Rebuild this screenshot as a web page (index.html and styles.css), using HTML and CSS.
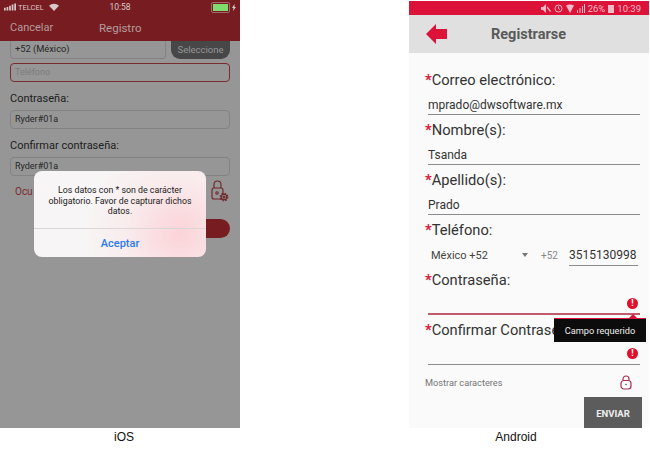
FILE: index.html
```html
<!DOCTYPE html>
<html lang="es">
  <head>
    <meta charset="UTF-8" />
    <title>Registro iOS / Android</title>
    <link rel="stylesheet" href="styles.css">
  </head>
  <body>
    <div class="shots">
      <!-- iOS -->
      <div class="shot">
        <div class="phone ios">
          <div class="ios-status">
            <div class="ios-carrier">
              <svg width="12" height="8" viewBox="0 0 14 8"><path fill="#d8c8c8" d="M0 5h2v3H0zM3 4h2v4H3zM6 2.500h2V8H6zM9 1h2v7H9zM12 0h2v8h-2z"/></svg>
              <span>TELCEL</span>
              <svg class="ios-wifi" width="10" height="8" viewBox="0 0 10 8"><path fill="#d8c8c8" d="M5 8 0 2.800C2.800 0 7.200 0 10 2.800z"/></svg>
            </div>
            <span class="ios-clock">10:58</span>
            <div class="ios-battery">
              <span class="ios-cell"><i></i></span>
              <svg width="4" height="7" viewBox="0 0 4 7"><path fill="#d8c8c8" d="M2.500 0 0 4h1.500L1 7l3-4H2.500z"/></svg>
            </div>
          </div>
          <div class="ios-nav">
            <span class="ios-cancel">Cancelar</span>
            <span class="ios-title">Registro</span>
          </div>
          <div class="ios-form">
            <div class="ios-row">
              <div class="ios-input grow cut">+52 (México)</div>
              <div class="ios-pick">Seleccione</div>
            </div>
            <div class="ios-input error placeholder">Teléfono</div>
            <div class="ios-label">Contraseña:</div>
            <div class="ios-input">Ryder#01a</div>
            <div class="ios-label">Confirmar contraseña:</div>
            <div class="ios-input">Ryder#01a</div>
            <div class="ios-show">
              <span>Ocu</span>
              <svg width="18" height="22" viewBox="0 0 18 22" fill="none" stroke="#6e2226" stroke-width="1.100">
                <rect x="1" y="8" width="11" height="11" rx="2"/>
                <path d="M3 8V4.500a3.500 3.500 0 0 1 7 0V8"/>
                <circle cx="6" cy="13" r="1.200"/>
                <circle cx="13" cy="17" r="2.800" fill="#969696"/>
                <circle cx="13" cy="17" r="3.800" stroke-width="1.200" stroke-dasharray="1.500 1.500"/>
                <circle cx="13" cy="17" r="1"/>
              </svg>
            </div>
            <div class="ios-send"></div>
          </div>
          <div class="ios-dialog">
            <p class="ios-msg">Los datos con * son de carácter obligatorio. Favor de capturar dichos datos.</p>
            <div class="ios-accept">Aceptar</div>
          </div>
        </div>
        <div class="caption ios-caption">iOS</div>
      </div>

      <!-- Android -->
      <div class="shot">
        <div class="phone android">
          <div class="and-status">
            <svg width="10" height="9" viewBox="0 0 10 9"><path fill="#f3b9c4" d="M0 3h2l3-3v9L2 6H0zM6 2l4 5-1 1-3-4z"/></svg>
            <svg width="9" height="9" viewBox="0 0 9 9" fill="none" stroke="#f3b9c4"><circle cx="4.500" cy="4.500" r="3.500"/><path d="M4.500 2.500v2l1.500 1"/></svg>
            <svg width="8" height="9" viewBox="0 0 8 9"><path fill="#f3b9c4" d="M0 1.500C2.500 0 5.500 0 8 1.500L4 9z"/></svg>
            <svg width="8" height="9" viewBox="0 0 8 9"><path fill="#f3b9c4" d="M0 6h1v3H0zM2.500 4h1v5h-1zM5 2h1v7H5zM7 0h1v9H7z"/></svg>
            <span>26%</span>
            <svg width="6" height="9" viewBox="0 0 6 9"><path fill="#f3b9c4" d="M0 1h6v8H0z"/></svg>
            <span>10:39</span>
          </div>
          <div class="and-header">
            <svg class="and-back" width="21" height="20" viewBox="0 0 21 20"><path fill="#dd1238" d="M0 10 10 0v5h11v10H10v5z"/></svg>
            <span>Registrarse</span>
          </div>
          <div class="and-form">
            <div class="and-label"><b>*</b>Correo electrónico:</div>
            <div class="and-value">mprado@dwsoftware.mx</div>
            <div class="and-label"><b>*</b>Nombre(s):</div>
            <div class="and-value">Tsanda</div>
            <div class="and-label"><b>*</b>Apellido(s):</div>
            <div class="and-value">Prado</div>
            <div class="and-label"><b>*</b>Teléfono:</div>
            <div class="and-phone">
              <span class="and-country">México +52</span>
              <span class="and-caret"></span>
              <span class="and-code">+52</span>
              <span class="and-number">3515130998</span>
            </div>
            <div class="and-label"><b>*</b>Contraseña:</div>
            <div class="and-value invalid"><span class="and-alert">!</span></div>
            <div class="and-label"><b>*</b>Confirmar Contraseña:</div>
            <div class="and-value"><span class="and-alert">!</span></div>
            <div class="and-show">
              <span>Mostrar caracteres</span>
              <svg width="12" height="15" viewBox="0 0 12 15" fill="none" stroke="#a3324f" stroke-width="1.200">
                <rect x="1" y="5.500" width="10" height="8.500" rx="3"/>
                <path d="M3 5.500V4a3 3 0 0 1 6 0v1.500"/>
                <circle cx="6" cy="9.500" r=".8" fill="#555" stroke="none"/>
              </svg>
            </div>
            <div class="and-actions"><div class="and-send">ENVIAR</div></div>
          </div>
          <div class="and-tooltip">Campo requerido</div>
        </div>
        <div class="caption android-caption">Android</div>
      </div>
    </div>
  </body>
</html>
```

FILE: styles.css
```css
body {
  margin: 0;
  background-color: #fff;
  font-family: "Liberation Sans", Arial, sans-serif;
}
.shots {
  display: flex;
  justify-content: space-between;
  width: 649px;
}
.shot {
  width: 240px;
}
.phone {
  position: relative;
  height: 428px;
  overflow: hidden;
}
.caption {
  padding-top: 1px;
  font-size: 12px;
  line-height: 16px;
  text-align: center;
  color: #111;
}
.ios-caption {
  padding-left: 8px;
}
.android-caption {
  padding-right: 26px;
}

/* iOS */
.ios {
  background-color: #969696;
  font-family: "Roboto", sans-serif;
}
.ios-status {
  display: flex;
  align-items: center;
  justify-content: space-between;
  height: 14px;
  padding: 0 4px;
  background-color: #771c21;
  font-size: 7.500px;
  color: #d8c8c8;
}
.ios-carrier {
  display: flex;
  align-items: center;
  gap: 2px;
  width: 80px;
}
.ios-wifi {
  margin-left: 3px;
}
.ios-clock {
  font-size: 8.500px;
}
.ios-battery {
  display: flex;
  align-items: center;
  justify-content: flex-end;
  gap: 2px;
  width: 80px;
}
.ios-cell {
  display: block;
  width: 15px;
  height: 7px;
  padding: 1px;
  border: 1px solid #a06a6a;
  border-radius: 2px;
}
.ios-cell i {
  display: block;
  height: 100%;
  background-color: #7fdc6f;
}
.ios-nav {
  display: flex;
  align-items: center;
  height: 27px;
  padding-left: 10px;
  background-color: #771c21;
  font-size: 11px;
  color: #b39c9c;
}
.ios-cancel {
  width: 89px;
}
.ios-title {
  font-size: 11.500px;
}
.ios-form {
  display: flex;
  flex-direction: column;
  padding: 0 10px;
}
.ios-row {
  display: flex;
  gap: 5px;
  height: 18px;
  margin-bottom: 4px;
}
.ios-input {
  box-sizing: border-box;
  height: 19px;
  padding-left: 4px;
  border: 1px solid #838383;
  border-radius: 4px;
  font-size: 9px;
  line-height: 17px;
  color: #262626;
}
.ios-input.grow {
  flex: 1;
  height: 18px;
  font-size: 9.300px;
  line-height: 15px;
}
.ios-input.cut {
  border-top: 0;
  border-radius: 0 0 4px 4px;
}
.ios-input.error {
  border-color: #7a2a30;
}
.ios-input.placeholder {
  color: #7c7c7c;
}
.ios-pick {
  width: 59px;
  border-radius: 0 0 9px 9px / 9px;
  background-color: #474747;
  font-size: 9.500px;
  line-height: 17px;
  text-align: center;
  color: #969696;
}
.ios-label {
  padding: 10px 0 5px;
  font-size: 11px;
  line-height: 13px;
  color: #1c1c1c;
}
.ios-show {
  display: flex;
  align-items: center;
  justify-content: space-between;
  height: 26px;
  margin-top: 2px;
  padding: 0 1px 0 5px;
  font-size: 10px;
  color: #7a2a30;
}
.ios-send {
  align-self: flex-end;
  width: 120px;
  height: 19px;
  margin-top: 15px;
  border-radius: 10px;
  background-color: #771c21;
}
.ios-dialog {
  position: absolute;
  top: 171px;
  left: 34px;
  width: 172px;
  height: 86px;
  border-radius: 8px;
  background: radial-gradient(circle at 85% 72%, #fbd3d8 0, #f9eced 35%, #f7f5f5 60%);
}
.ios-msg {
  box-sizing: border-box;
  height: 58px;
  margin: 0;
  padding: 14px 12px 0;
  border-bottom: 1px solid #ddd6d6;
  font-size: 8.800px;
  line-height: 10.500px;
  text-align: center;
  color: #222;
}
.ios-accept {
  font-size: 11px;
  font-weight: 500;
  line-height: 29px;
  text-align: center;
  color: #2b7bf0;
}

/* Android */
.android {
  background-color: #fafafa;
  font-family: "Roboto", sans-serif;
}
.and-status {
  display: flex;
  align-items: center;
  justify-content: flex-end;
  gap: 3px;
  height: 14px;
  padding-right: 8px;
  border-top: 1px solid #fff;
  background-color: #dd1238;
  font-size: 9.500px;
  color: #f3b9c4;
}
.and-header {
  display: flex;
  align-items: center;
  height: 38px;
  background-color: #e0e0e0;
  font-size: 14.500px;
  font-weight: 700;
  color: #5a5a5a;
}
.and-back {
  margin: 0 44px 0 17px;
}
.and-form {
  display: flex;
  flex-direction: column;
  padding: 17px 9px 0 16px;
}
.and-label {
  font-size: 14.700px;
  line-height: 20px;
  white-space: nowrap;
  color: #333;
}
.and-label b {
  font-weight: 700;
  color: #dd1238;
}
.and-value {
  display: flex;
  align-items: center;
  box-sizing: border-box;
  height: 25px;
  margin: 0 0 5px 3px;
  padding: 6px 1px 0 0;
  border-bottom: 1px solid #8b8b8b;
  font-size: 12px;
  color: #333;
}
.and-value.invalid {
  border-bottom: 2px solid #c05a6c;
}
.and-alert {
  display: block;
  width: 11px;
  height: 11px;
  margin: -3px 1px 0 auto;
  border-radius: 50%;
  background-color: #e0102c;
  font-size: 9px;
  font-weight: 700;
  line-height: 11px;
  text-align: center;
  color: #fff;
}
.and-phone {
  display: flex;
  align-items: center;
  height: 30px;
  margin-left: 6px;
  font-size: 11px;
  color: #444;
}
.and-country {
  width: 91px;
}
.and-caret {
  width: 0;
  height: 0;
  margin-right: 13px;
  border-top: 4px solid #777;
  border-left: 3px solid transparent;
  border-right: 3px solid transparent;
}
.and-code {
  width: 28px;
  font-size: 10px;
  color: #888;
}
.and-number {
  padding: 3px 2px 3px 0;
  border-bottom: 1px solid #8b8b8b;
  font-size: 12px;
  color: #333;
}
.and-show {
  display: flex;
  align-items: center;
  justify-content: space-between;
  height: 20px;
  margin-top: 2px;
  padding-right: 8px;
  font-size: 9.200px;
  color: #777;
}
.and-actions {
  display: flex;
  justify-content: flex-end;
  margin: 5px -2px 0 0;
}
.and-send {
  width: 58px;
  height: 33px;
  background-color: #5c5c5c;
  font-size: 9.500px;
  font-weight: 700;
  line-height: 33px;
  text-align: center;
  color: #eee;
}
.and-tooltip {
  position: absolute;
  top: 318px;
  left: 145px;
  width: 92px;
  height: 23px;
  border-top: 1px solid #dd1238;
  background-color: #0c0c0c;
  font-size: 9.200px;
  line-height: 24px;
  text-align: center;
  color: #eee;
}
.and-tooltip::before {
  content: "";
  position: absolute;
  top: -5px;
  right: 9px;
  border-bottom: 4px solid #dd1238;
  border-left: 4px solid transparent;
  border-right: 4px solid transparent;
}
```
